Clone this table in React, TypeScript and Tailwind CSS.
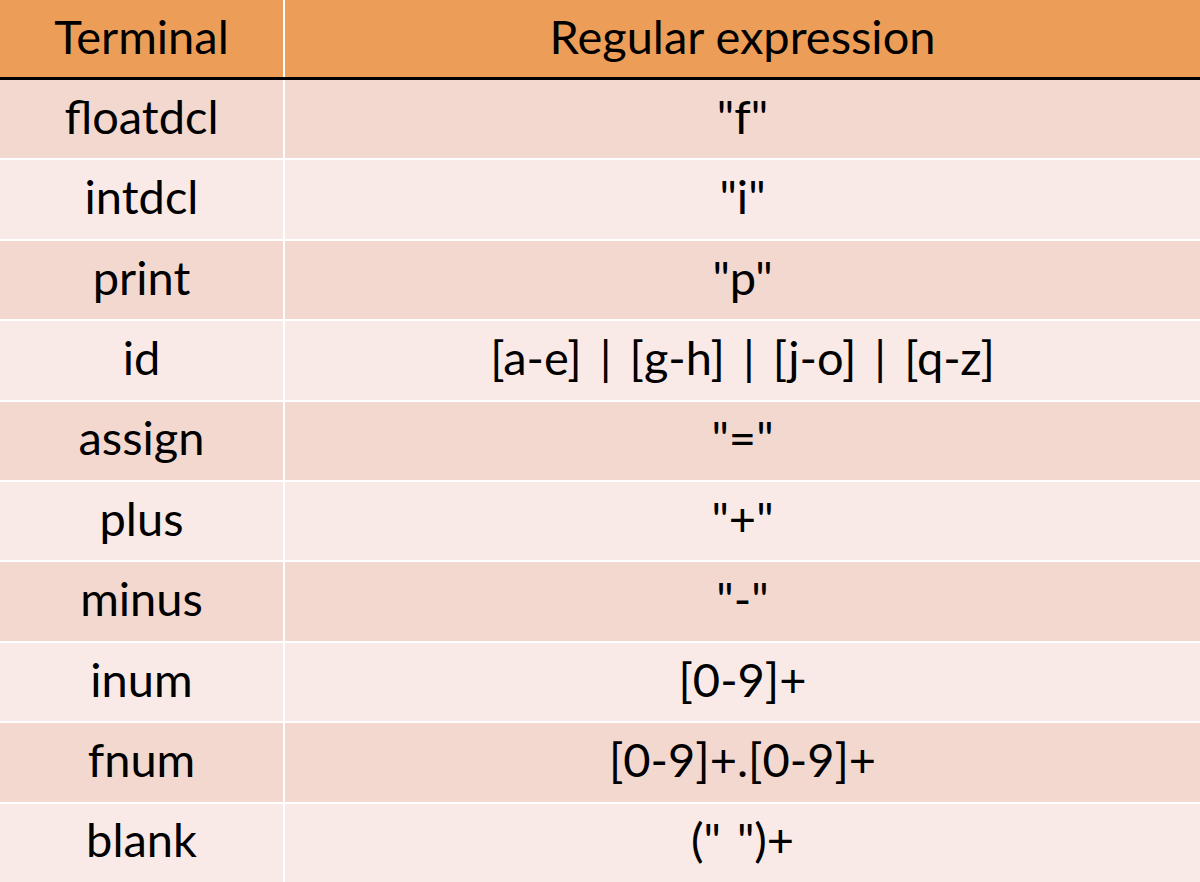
import React from "react";

const rows: [string, string][] = [
  ["floatdcl", '"f"'],
  ["intdcl", '"i"'],
  ["print", '"p"'],
  ["id", "[a-e] | [g-h] | [j-o] | [q-z]"],
  ["assign", '"="'],
  ["plus", '"+"'],
  ["minus", '"-"'],
  ["inum", "[0-9]+"],
  ["fnum", "[0-9]+.[0-9]+"],
  ["blank", '(" ")+'],
];

export default function App() {
  return (
    <div
      className="w-[1200px] h-[882px] bg-white flex flex-col overflow-hidden text-black text-[47px] leading-none"
      style={{ fontFamily: "Lato, 'Open Sans', sans-serif" }}
    >
      <div className="flex h-[80px] shrink-0 border-b-[3px] border-black bg-white gap-[2px]">
        <div className="w-[283px] bg-[#EC9E58] flex items-center justify-center pb-[4px]">Terminal</div>
        <div className="flex-1 bg-[#EC9E58] flex items-center justify-center pb-[4px]">Regular expression</div>
      </div>
      <div className="flex-1 flex flex-col gap-[2px]">
        {rows.map(([a, b], i) => {
          const bg = i % 2 === 0 ? "bg-[#F2D8CF]" : "bg-[#F9EAE8]";
          return (
            <div key={a} className="flex flex-1 gap-[2px]">
              <div className={`w-[283px] ${bg} flex items-center justify-center pb-[6px]`}>{a}</div>
              <div
                className={`flex-1 ${bg} flex items-center justify-center pb-[6px] ${
                  a === "id" ? "[word-spacing:6px]" : "[word-spacing:4px]"
                }`}
              >
                {b}
              </div>
            </div>
          );
        })}
      </div>
    </div>
  );
}
